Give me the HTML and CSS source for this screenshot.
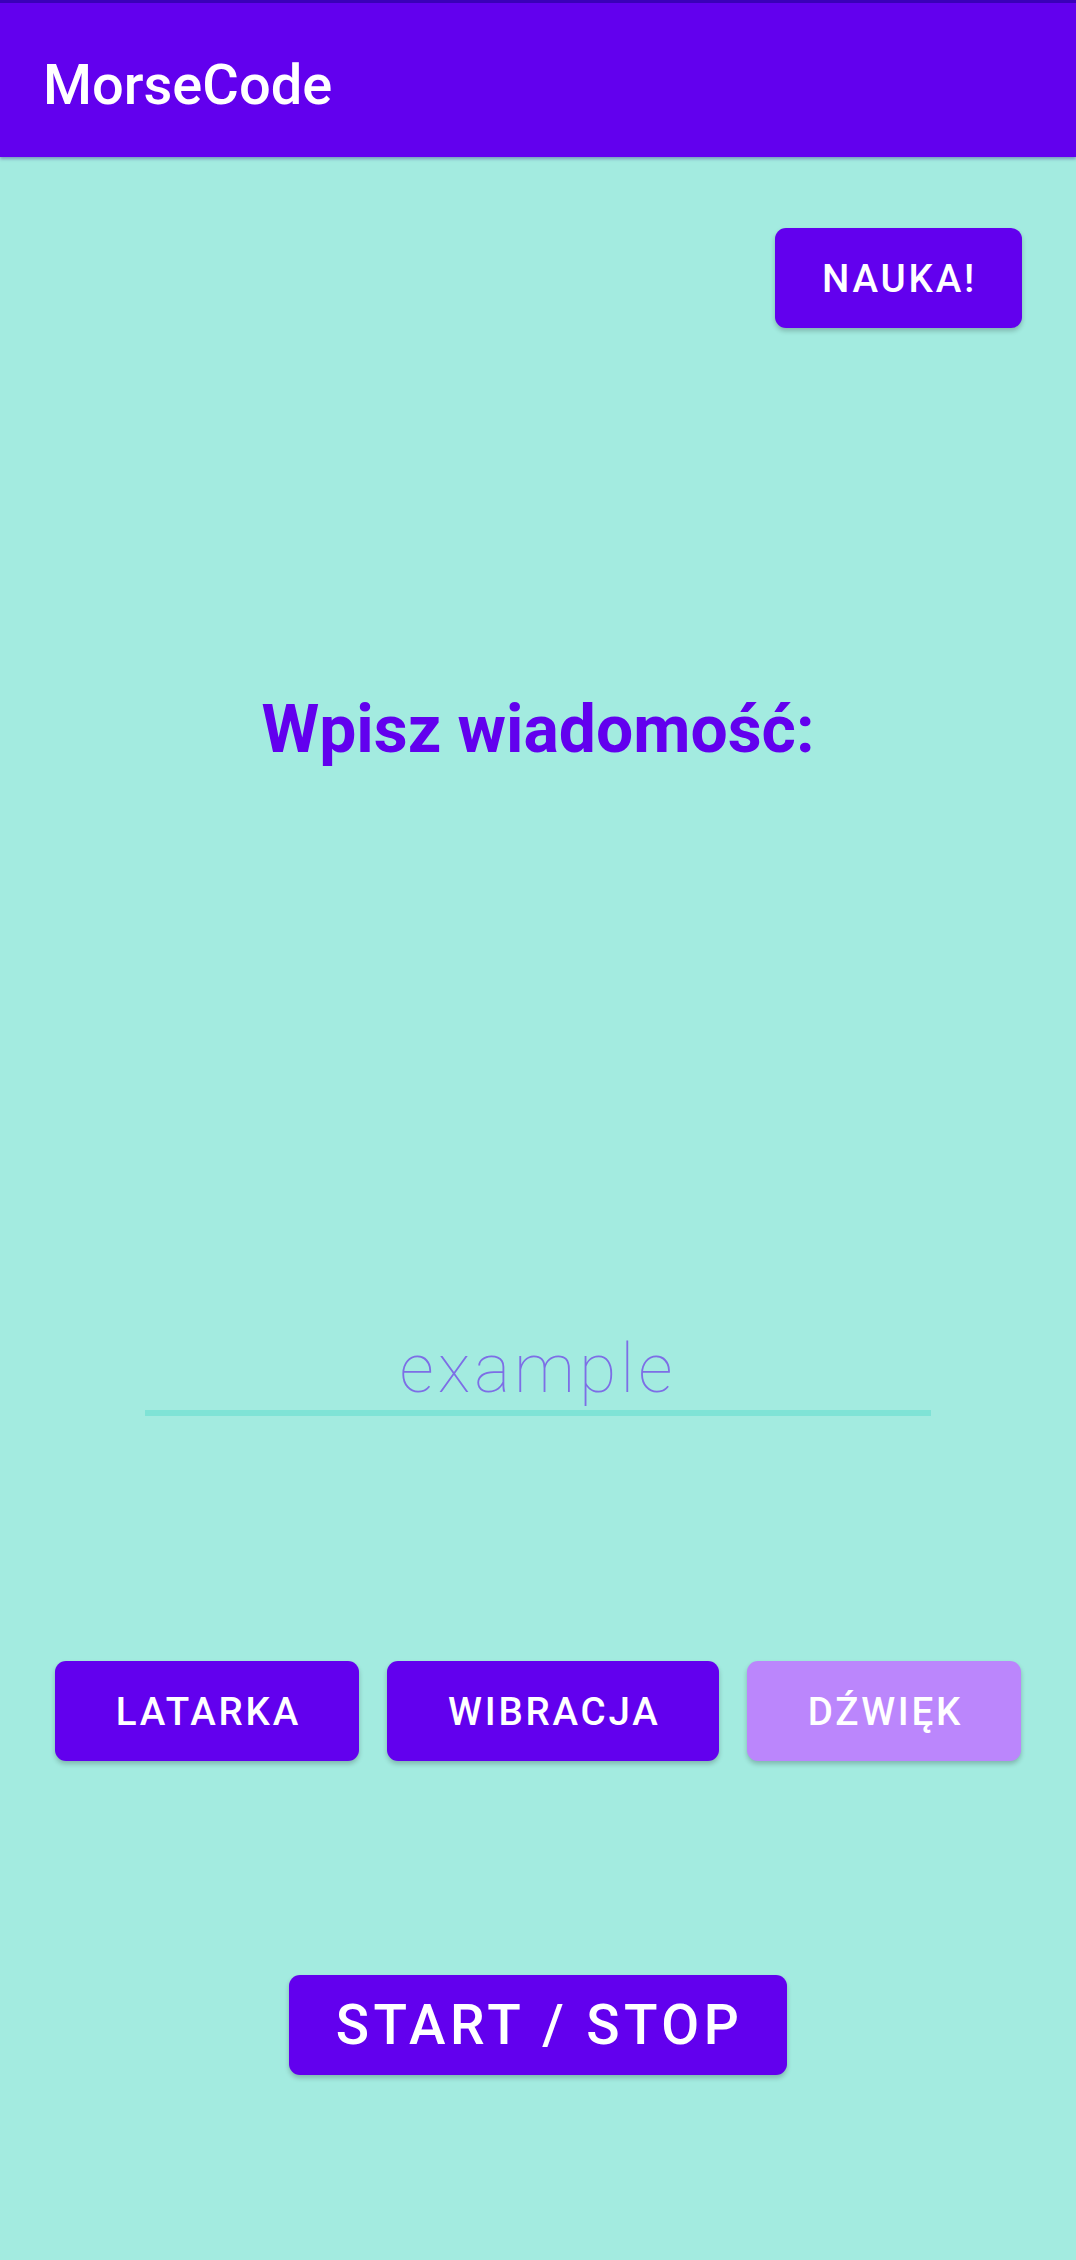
FILE: index.html
```html
<!DOCTYPE html>
<html lang="pl">
<head>
<meta charset="utf-8">
<title>MorseCode</title>
<link rel="stylesheet" href="styles.css">
</head>
<body>
<header class="appbar">
  <h1 class="appbar-title">MorseCode</h1>
</header>
<main class="content">
  <div class="top-row">
    <button class="btn btn-small">NAUKA!</button>
  </div>
  <h2 class="prompt">Wpisz wiadomość:</h2>
  <div class="field">
    <span class="field-hint">example</span>
  </div>
  <div class="mode-row">
    <button class="btn btn-small">LATARKA</button>
    <button class="btn btn-small">WIBRACJA</button>
    <button class="btn btn-small btn-light">DŹWIĘK</button>
  </div>
  <div class="start-row">
    <button class="btn btn-large">START / STOP</button>
  </div>
</main>
</body>
</html>
```

FILE: styles.css
```css
html, body {
  margin: 0;
  padding: 0;
}
body {
  width: 1076px;
  height: 2260px;
  background: #a3ebe0;
  font-family: Roboto, "Liberation Sans", sans-serif;
  overflow: hidden;
}
.appbar {
  box-sizing: border-box;
  height: 157px;
  background: #6200ee;
  border-top: 3px solid #3a00b8;
  display: flex;
  align-items: center;
  padding-left: 43px;
  box-shadow: 0 2px 3px rgba(40, 0, 120, 0.35);
  position: relative;
  z-index: 1;
}
.appbar-title {
  margin: 0;
  color: #ffffff;
  font-size: 56px;
  font-weight: 500;
  line-height: 1;
  padding-top: 10px;
}
.content {
  display: flex;
  flex-direction: column;
}
.btn {
  border: none;
  margin: 0;
  background: #6200ee;
  color: #ffffff;
  font-family: Roboto, "Liberation Sans", sans-serif;
  font-weight: 500;
  border-radius: 11px;
  height: 100px;
  display: flex;
  align-items: center;
  justify-content: center;
  box-shadow: 0 3px 5px rgba(0, 0, 0, 0.22);
}
.btn-small {
  font-size: 38.5px;
  letter-spacing: 2.8px;
  padding: 0 58px 0 61px;
}
.btn-light {
  background: #bb86fc;
}
.top-row {
  display: flex;
  justify-content: flex-end;
  margin-top: 71px;
  padding-right: 54px;
}
.top-row .btn {
  padding: 0 45px 0 47px;
}
.prompt {
  margin: 363px 0 0;
  text-align: center;
  color: #6200ee;
  font-size: 66px;
  font-weight: 700;
  line-height: 77px;
}
.field {
  align-self: center;
  width: 786px;
  margin-top: 563px;
  padding-bottom: 2px;
  border-bottom: 6px solid #7fe3d6;
  text-align: center;
  line-height: 77px;
  height: 77px;
}
.field-hint {
  font-size: 68px;
  font-weight: 100;
  letter-spacing: 4px;
  color: #7d6ee6;
}
.mode-row {
  display: flex;
  justify-content: center;
  gap: 28px;
  margin-top: 245px;
}
.start-row {
  display: flex;
  justify-content: center;
  margin-top: 214px;
}
.btn-large {
  font-size: 55px;
  letter-spacing: 4.5px;
  padding: 0 44px 0 47px;
}
```
